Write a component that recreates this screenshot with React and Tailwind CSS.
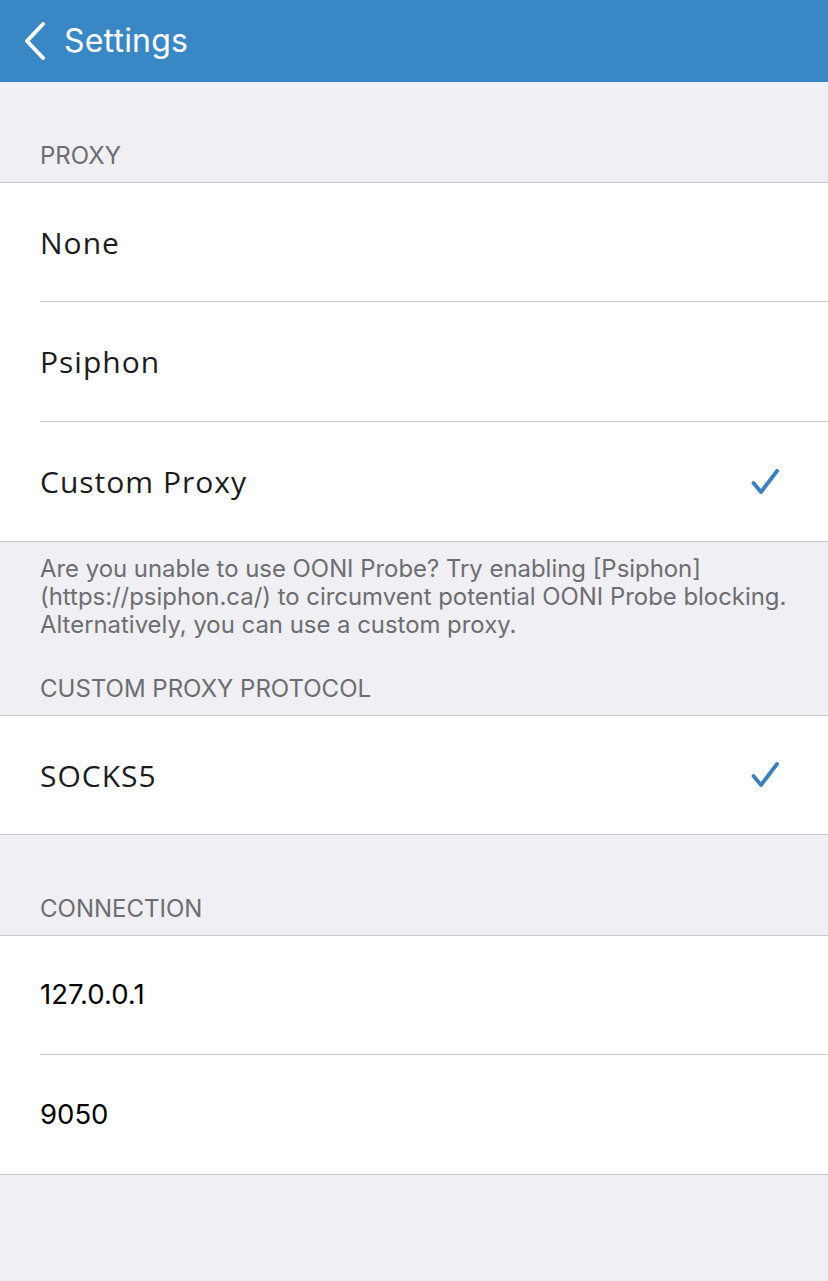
function Check() {
  return (
    <svg width="30" height="28" viewBox="0 0 30 28" fill="none">
      <path
        d="M3.5 15 L11 24 L27 3"
        stroke="#3a7fc0"
        strokeWidth="3.8"
        strokeLinecap="round"
        strokeLinejoin="round"
      />
    </svg>
  );
}

function BackChevron() {
  return (
    <svg width="26" height="40" viewBox="0 0 26 40" fill="none">
      <path
        d="M21 3 L5 20 L21 37"
        stroke="white"
        strokeWidth="4"
        strokeLinecap="round"
        strokeLinejoin="round"
      />
    </svg>
  );
}

function Row({ label, checked, last, mono, h }) {
  return (
    <div className="pl-10 bg-white">
      <div
        className={
          "flex items-center justify-between pr-12 " +
          h +
          (last ? "" : " border-b border-[#c8c7cc]")
        }
      >
        <span
          className={
            mono
              ? "text-[27.5px] text-black font-['Inter',sans-serif]"
              : "text-[30px] text-[#1c1c1e] tracking-[1px] font-['Open_Sans',sans-serif]"
          }
        >
          {label}
        </span>
        {checked && <Check />}
      </div>
    </div>
  );
}

function SectionLabel({ children, className }) {
  return (
    <div
      className={
        "px-10 text-[24px] text-[#6d6d72] font-['Inter',sans-serif] leading-none " +
        className
      }
    >
      {children}
    </div>
  );
}

export default function App() {
  return (
    <div className="min-h-[1281px] bg-[#efeff4] font-['Inter',sans-serif]">
      <div className="h-[82px] bg-[#3a87c6] flex items-center pl-[22px] text-white">
        <BackChevron />
        <span className="text-[32px] ml-4 tracking-[0.2px]">Settings</span>
      </div>

      <SectionLabel className="pt-[62px] pb-[14px]">PROXY</SectionLabel>
      <div className="border-y border-[#c8c7cc]">
        <Row label="None" h="h-[119px]" />
        <Row label="Psiphon" h="h-[120px]" />
        <Row label="Custom Proxy" checked last h="h-[119px]" />
      </div>

      <div className="px-10 pt-[13px] text-[23.9px] leading-[28px] text-[#6d6d72]">
        Are you unable to use OONI Probe? Try enabling [Psiphon]
        (https://psiphon.ca/) to circumvent potential OONI Probe blocking.
        Alternatively, you can use a custom proxy.
      </div>

      <SectionLabel className="pt-[38px] pb-[14px]">
        CUSTOM PROXY PROTOCOL
      </SectionLabel>
      <div className="border-y border-[#c8c7cc]">
        <Row label="SOCKS5" checked last h="h-[118px]" />
      </div>

      <SectionLabel className="pt-[62px] pb-[14px]">CONNECTION</SectionLabel>
      <div className="border-y border-[#c8c7cc]">
        <Row label="127.0.0.1" mono h="h-[119px]" />
        <Row label="9050" mono last h="h-[119px]" />
      </div>
    </div>
  );
}
